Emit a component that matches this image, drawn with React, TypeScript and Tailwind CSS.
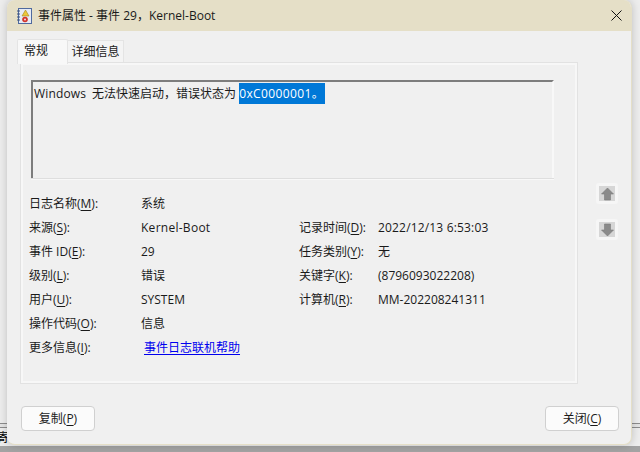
import React from "react";

const Ul = ({ c }: { c: string }) => <span className="underline underline-offset-2">{c}</span>;

function Row({ label, k, value }: { label: string; k: string; value: React.ReactNode }) {
  return (
    <div className="flex h-6 items-center">
      <div className="w-[112px] shrink-0 whitespace-nowrap">{label}(<Ul c={k} />):</div>
      <div className="whitespace-nowrap">{value}</div>
    </div>
  );
}

function RightRow({ label, k, value }: { label: string; k: string; value: React.ReactNode }) {
  return (
    <div className="flex h-6 items-center">
      <div className="w-[79px] shrink-0 whitespace-nowrap">{label}(<Ul c={k} />):</div>
      <div className="whitespace-nowrap">{value}</div>
    </div>
  );
}

function Arrow({ down }: { down?: boolean }) {
  return (
    <div className="flex h-[21px] w-[22px] items-center justify-center rounded-[3px] border-[3px] border-[#f6f6f6] bg-[#d6d6d6]">
      <svg width="13" height="14" viewBox="0 0 13 14" className={down ? "rotate-180" : ""}>
        <path d="M6.5 1 L12.5 7 L9.5 7 L9.5 13 L3.5 13 L3.5 7 L0.5 7 Z" fill="#8a8a8a" stroke="#7a7a7a" strokeWidth="0.6" />
      </svg>
    </div>
  );
}

export default function App() {
  return (
    <div className="relative h-[452px] w-[640px] overflow-hidden bg-[#ededed] font-['Open_Sans','Noto_Sans_CJK_SC',sans-serif] text-[12px] leading-4 text-[#1a1a1a]">
      <div className="absolute inset-x-0 top-[423px] h-[5px] border-y border-[#8c8c8c] bg-[#e4e4e4]" />
      <span className="absolute left-[-3px] top-[430px] text-black">寄</span>
      <div className="absolute inset-x-0 bottom-0 h-[6px] bg-[#a3a3a3]" />
      <div className="absolute left-[7px] top-0 flex h-[445px] w-[625px] flex-col overflow-hidden rounded-[8px] border-r border-b border-[#e5dfc7] bg-[#f0f0f0] shadow-[0_0_8px_rgba(0,0,0,0.2)]">
        <div className="flex h-[31px] shrink-0 items-center bg-[#e5dfc7] pl-[10px] pr-[9px]">
          <svg width="15" height="16" viewBox="0 0 15 16">
            <rect x="1.5" y="0.5" width="13" height="15" fill="#e6ebf5" stroke="#4f6a9e" />
            <path d="M0 3h3M0 6h3M0 9h3M0 12h3" stroke="#39507f" strokeWidth="1" />
            <path d="M8.5 2 L12 8 L5 8 Z" fill="#ecc83a" stroke="#a5841f" strokeWidth="0.6" />
            <circle cx="8" cy="11.5" r="2.8" fill="#d2342c" />
            <circle cx="8" cy="11.5" r="1" fill="#f6dede" />
          </svg>
          <span className="ml-[6px] whitespace-nowrap">事件属性 - 事件 29，Kernel-Boot</span>
          <svg className="ml-auto" width="11" height="11" viewBox="0 0 11 11">
            <path d="M0.5 0.5 L10.5 10.5 M10.5 0.5 L0.5 10.5" stroke="#111" strokeWidth="1" />
          </svg>
        </div>

        <div className="flex flex-1 flex-col pl-[10px]">
          <div className="flex h-[32px] shrink-0 items-end pt-2">
            <div className="z-10 -mb-px flex h-[25px] w-[51px] items-start rounded-t-[2px] border border-b-0 border-[#e4e4e4] bg-[#f8f8f8] pl-[6px] pt-[3px]">常规</div>
            <div className="flex h-[23px] w-[56px] items-center justify-center border border-b-0 border-l-0 border-[#e4e4e4] bg-[#f4f4f4]">详细信息</div>
          </div>
          <div className="relative ml-[4px] flex h-[320px] w-[556px] flex-col border-2 border-[#f7f7f7] outline outline-1 -outline-offset-0 outline-[#e2e2e2] pl-[8px] pt-[15px]">
            <div className="h-[98px] w-[523px] border-2 border-b-0 border-r-2 border-[#7d7d7d] border-r-[#f8f8f8] bg-[#f0f0f0] pl-[1px] pt-[4px]">
              <div className="whitespace-nowrap">
                <span className="tracking-[0.15px]">Windows</span>
                <span className="ml-[6px]">无法快速启动，错误状态为</span>
                <span className="ml-[3px] bg-[#0078d7] py-[2px] pr-[1px] tracking-[0.4px] text-white">0xC0000001。</span>
              </div>
            </div>
            <div className="h-[1px] w-[523px] bg-[#dedede]" />
            <div className="h-[1px] w-[523px] bg-[#f8f8f8]" />

            <div className="-ml-[2px] mt-[12px] flex flex-col">
              <Row label="日志名称" k="M" value="系统" />
              <div className="grid grid-cols-[270px_1fr]">
                <Row label="来源" k="S" value={<span className="tracking-[0.27px]">Kernel-Boot</span>} />
                <RightRow label="记录时间" k="D" value={<span className="tracking-[0.17px]">2022/12/13 6:53:03</span>} />
                <Row label="事件 ID" k="E" value="29" />
                <RightRow label="任务类别" k="Y" value="无" />
                <Row label="级别" k="L" value="错误" />
                <RightRow label="关键字" k="K" value="(8796093022208)" />
                <Row label="用户" k="U" value="SYSTEM" />
                <RightRow label="计算机" k="R" value="MM-202208241311" />
              </div>
              <Row label="操作代码" k="O" value="信息" />
              <Row label="更多信息" k="I" value={<span className="ml-[3px] text-[#0000ee] underline underline-offset-2">事件日志联机帮助</span>} />
            </div>
          </div>
          <div className="mt-[23px] flex items-center justify-between pl-[4px] pr-[12px]">
            <button className="h-[25px] w-[74px] rounded-[4px] border border-[#d0d0d0] bg-[#fbfbfb] text-center">复制(<Ul c="P" />)</button>
            <button className="h-[25px] w-[74px] rounded-[4px] border border-[#d0d0d0] bg-[#fbfbfb] text-center">关闭(<Ul c="C" />)</button>
          </div>
        </div>
        <div className="absolute left-[589px] top-[183px] flex flex-col gap-[15px]">
          <Arrow />
          <Arrow down />
        </div>
      </div>
    </div>
  );
}
